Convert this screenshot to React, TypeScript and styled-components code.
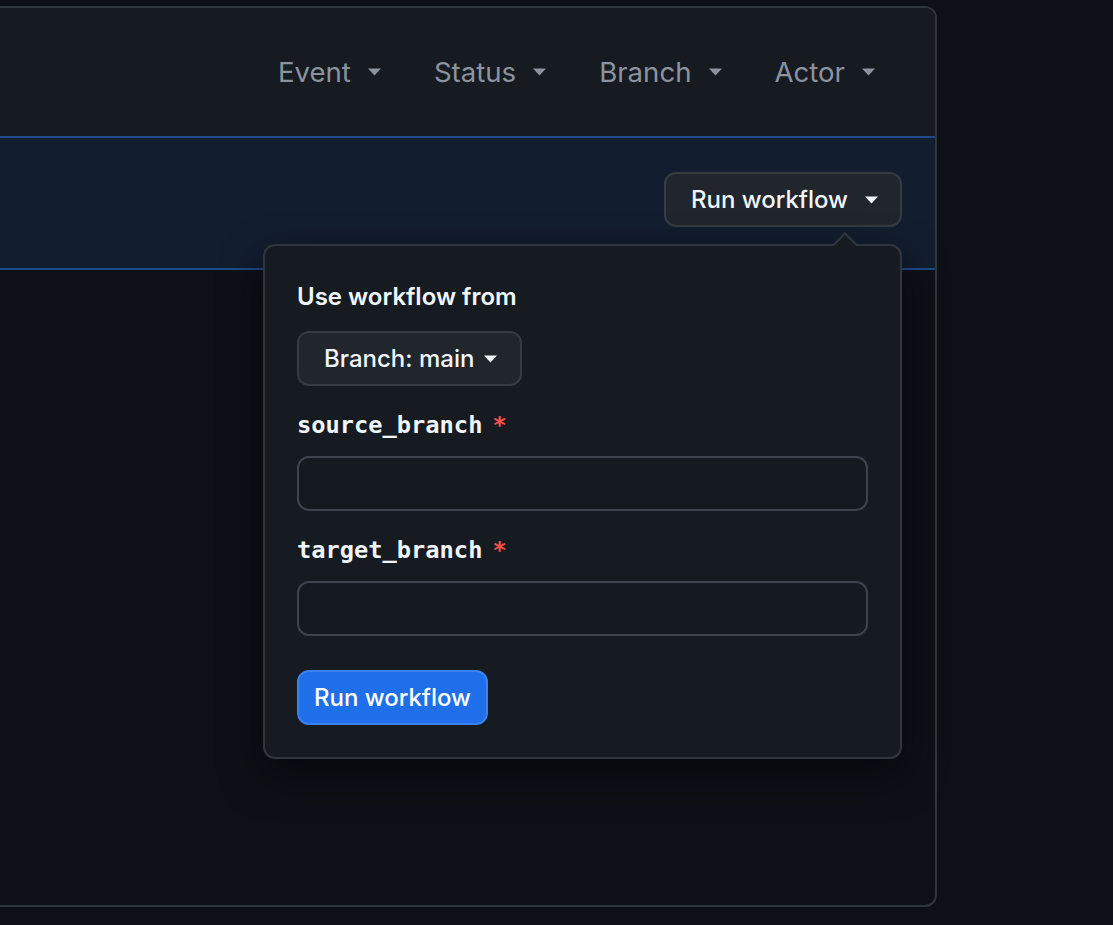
import React from 'react'
import styled, {createGlobalStyle} from 'styled-components'

// types
type FilterType = {
    label: string
}

type FieldType = {
    name: string
}

const filterList = ['Event', 'Status', 'Branch', 'Actor']
const inputList = ['source_branch', 'target_branch']

const GlobalStyle = createGlobalStyle`
  html, body {
    margin: 0;
    padding: 0;
    background-color: #0d1117;
    font-family: Inter, "Noto Sans", "Liberation Sans", sans-serif;
  }
`

const Caret = (props: {color?: string}) => (
    <CaretIcon viewBox="0 0 14 8" fill={props.color || 'currentColor'}>
        <path d="M0.5 0.5 L13.5 0.5 L7 7.5 Z"/>
    </CaretIcon>
)

const Filter = (props: FilterType) => (
    <FilterButton>
        {props.label}
        <Caret/>
    </FilterButton>
)

const Field = (props: FieldType) => (
    <FieldBlock>
        <FieldLabel>
            {props.name}
            <Required>*</Required>
        </FieldLabel>
        <TextInput type="text"/>
    </FieldBlock>
)

export default function App() {
    return (
        <>
            <GlobalStyle/>
            <Page>
                <Panel>
                    <Header>
                        {filterList.map((item) => <Filter key={item} label={item}/>)}
                    </Header>

                    <Banner>
                        <DispatchWrap>
                            <DispatchButton>
                                Run workflow
                                <Caret/>
                            </DispatchButton>

                            <Popover>
                                <Arrow/>
                                <PopoverTitle>Use workflow from</PopoverTitle>
                                <BranchButton>
                                    Branch: main
                                    <Caret/>
                                </BranchButton>
                                {inputList.map((item) => <Field key={item} name={item}/>)}
                                <SubmitButton>Run workflow</SubmitButton>
                            </Popover>
                        </DispatchWrap>
                    </Banner>

                    <Body/>
                </Panel>
            </Page>
        </>
    )
}

const Page = styled.div`
  width: 1113px;
  height: 925px;
  overflow: hidden;
  padding-top: 6px;
  box-sizing: border-box;
`

const Panel = styled.div`
  margin-left: -20px;
  width: 957px;
  height: 901px;
  box-sizing: border-box;
  border: 2px solid #30363d;
  border-radius: 12px;
  display: flex;
  flex-direction: column;
`

const Header = styled.div`
  height: 128px;
  flex-shrink: 0;
  background-color: #161b22;
  border-radius: 10px 10px 0 0;
  border-bottom: 2px solid #1f4a8a;
  display: flex;
  justify-content: flex-end;
  align-items: center;
  gap: 52px;
  padding-right: 59px;
`

const CaretIcon = styled.svg`
  width: 15px;
  height: 8px;
  flex-shrink: 0;
`

const FilterButton = styled.button`
  display: flex;
  align-items: center;
  gap: 16px;
  padding: 0;
  background: none;
  border: none;
  font-family: inherit;
  font-size: 27.6px;
  color: #8b949e;
  cursor: pointer;
`

const Banner = styled.div`
  flex-shrink: 0;
  background-color: #121d2f;
  border-bottom: 2px solid #1f4a8a;
  display: flex;
  justify-content: flex-end;
  align-items: flex-start;
  padding: 34px 33px 0 0;
  height: 96px;
`

const DispatchWrap = styled.div`
  position: relative;
`

const BaseButton = styled.button`
  display: flex;
  align-items: center;
  box-sizing: border-box;
  height: 55px;
  border-radius: 12px;
  font-family: inherit;
  font-weight: 500;
  cursor: pointer;
`

const DispatchButton = styled(BaseButton)`
  width: 238px;
  justify-content: center;
  gap: 16px;
  padding: 0 0 0 4px;
  background-color: #21262d;
  border: 2px solid #363b42;
  color: #f0f6fc;
  font-size: 24px;
`

const Popover = styled.div`
  position: absolute;
  top: 72px;
  right: 0;
  width: 639px;
  box-sizing: border-box;
  padding: 36px 32px 32px 32px;
  background-color: #161b22;
  border: 2px solid #30363d;
  border-radius: 12px;
  box-shadow: 0 16px 40px rgba(1, 4, 9, 0.6);
  display: flex;
  flex-direction: column;
  align-items: flex-start;
  z-index: 10;
`

const Arrow = styled.span`
  position: absolute;
  top: -14px;
  right: 42px;
  width: 0;
  height: 0;
  border-left: 13px solid transparent;
  border-right: 13px solid transparent;
  border-bottom: 13px solid #30363d;

  &::after {
    content: '';
    position: absolute;
    left: -11px;
    top: 3px;
    border-left: 11px solid transparent;
    border-right: 11px solid transparent;
    border-bottom: 11px solid #161b22;
  }
`

const PopoverTitle = styled.div`
  font-size: 24px;
  font-weight: 600;
  color: #f0f6fc;
  line-height: 30px;
`

const BranchButton = styled(BaseButton)`
  margin-top: 19px;
  width: 225px;
  padding: 0 0 0 25px;
  gap: 9px;
  background-color: #21262d;
  border: 2px solid #363b42;
  color: #f0f6fc;
  font-size: 24px;
`

const FieldBlock = styled.div`
  margin-top: 24px;
  width: 100%;
  display: flex;
  flex-direction: column;
  gap: 16px;
`

const FieldLabel = styled.label`
  font-family: "DejaVu Sans Mono", "Liberation Mono", monospace;
  font-weight: 700;
  font-size: 23.7px;
  line-height: 30px;
  color: #f0f6fc;
`

const Required = styled.span`
  color: #f85149;
  margin-left: 10px;
`

const TextInput = styled.input`
  width: 100%;
  height: 55px;
  box-sizing: border-box;
  background-color: #151a21;
  border: 2px solid #3d444d;
  border-radius: 12px;
  outline: none;
  color: #f0f6fc;
  font-size: 24px;
  padding: 0 18px;
`

const SubmitButton = styled(BaseButton)`
  margin-top: 34px;
  width: 191px;
  justify-content: center;
  padding: 0;
  background-color: #1f6feb;
  border: 2px solid #3b82f0;
  color: #ffffff;
  font-size: 24px;
`

const Body = styled.div`
  flex: 1;
`
